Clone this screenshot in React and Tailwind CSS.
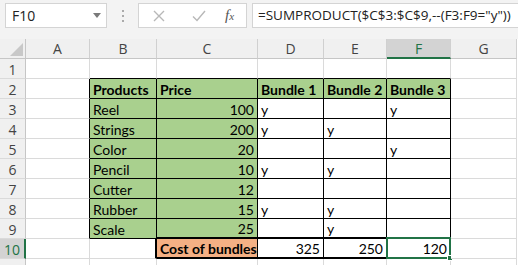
import React from "react";

const GREEN = "bg-[#a9d08e]";

const data = {
  2: ["Products", "Price", "Bundle 1", "Bundle 2", "Bundle 3"],
  3: ["Reel", "100", "y", "", "y"],
  4: ["Strings", "200", "y", "y", ""],
  5: ["Color", "20", "", "", "y"],
  6: ["Pencil", "10", "y", "y", ""],
  7: ["Cutter", "12", "", "", ""],
  8: ["Rubber", "15", "y", "y", ""],
  9: ["Scale", "25", "", "y", ""],
  10: ["", "Cost of bundles", "325", "250", "120"],
};

function inTable(r, c) {
  return (r >= 2 && r <= 9 && c >= 2 && c <= 6) || (r === 10 && c >= 3 && c <= 6);
}

function Cell({ r, c }) {
  const rightBlack = inTable(r, c) || inTable(r, c + 1);
  const bottomBlack = inTable(r, c) || inTable(r + 1, c);
  const thickBottom = (r === 9 || r === 10) && c >= 3 && c <= 6;
  const thickRight = r === 10 && c === 2;

  let rb = rightBlack ? "border-r border-r-black" : "border-r border-r-[#dadada]";
  if (thickRight) rb = "border-r-2 border-r-black";
  let bb = bottomBlack ? "border-b border-b-black" : "border-b border-b-[#dadada]";
  if (thickBottom) bb = "border-b-2 border-b-black";

  let bg = "bg-white";
  if (r >= 2 && r <= 9 && (c === 2 || c === 3)) bg = GREEN;
  if (r === 2 && c >= 4 && c <= 6) bg = GREEN;
  if (r === 10 && c === 3) bg = "bg-[#f4b084]";

  let text = "";
  if (data[r] && c >= 2 && c <= 6) text = data[r][c - 2];
  const bold = r === 2 || (r === 10 && c === 3);
  const right = (c === 3 && r >= 3 && r <= 9) || (r === 10 && c >= 4);
  const selected = r === 10 && c === 6;

  return (
    <div
      className={`relative h-[20px] ${rb} ${bb} ${bg} flex items-center px-[3px] pt-[1px] text-[14px] text-black whitespace-nowrap overflow-visible ${
        right ? "justify-end" : "justify-start"
      } ${bold ? "font-bold" : "font-normal"}`}
    >
      {text}
      {selected && (
        <>
          <div className="absolute left-[-1px] top-[-2px] right-[-1px] bottom-[-2px] border-2 border-[#217346]" />
          <div className="absolute right-[-3px] bottom-[-4px] w-[6px] h-[6px] bg-[#217346] border border-white" />
        </>
      )}
    </div>
  );
}

function RowHeader({ r }) {
  const sel = r === 10;
  return (
    <div
      className={`h-[20px] flex items-center justify-center text-[14px] pt-[1px] border-b border-b-[#dadada] ${
        sel
          ? "bg-[#d3d3d3] text-[#217346] border-r-2 border-r-[#217346]"
          : "bg-[#f0f0f0] text-[#444444] border-r border-r-[#c6c6c6]"
      }`}
    >
      {r}
    </div>
  );
}

function ColHeader({ label }) {
  const sel = label === "F";
  return (
    <div
      className={`h-[20px] flex items-center justify-center text-[14px] border-r border-r-[#d0d0d0] ${
        sel
          ? "bg-[#d3d3d3] text-[#217346] border-b-2 border-b-[#217346]"
          : "bg-[#f0f0f0] text-[#444444] border-b border-b-[#c6c6c6]"
      }`}
    >
      {label}
    </div>
  );
}

export default function App() {
  const rows = [1, 2, 3, 4, 5, 6, 7, 8, 9, 10];
  const cols = [1, 2, 3, 4, 5, 6, 7];
  return (
    <div className="w-[518px] h-[265px] overflow-hidden bg-white" style={{ fontFamily: "Lato, 'Noto Sans', sans-serif" }}>
      {/* formula bar */}
      <div className="h-[39px] bg-[#f3f3f3] flex items-start pt-[3px] pl-[5px]">
        <div className="w-[102px] shrink-0 h-[25px] bg-white border border-[#d4d4d4] flex items-center justify-between pl-[6px] pr-[5px]">
          <span className="text-[14px] text-[#222]" style={{ fontFamily: "'Open Sans', sans-serif" }}>F10</span>
          <svg width="8" height="5" viewBox="0 0 8 5"><path d="M0 0h8L4 5z" fill="#7a7a7a" /></svg>
        </div>
        <div className="w-[31px] shrink-0 h-[25px] flex flex-col items-center justify-center gap-[3px]">
          <div className="w-[2px] h-[2px] bg-[#aaaaaa]" />
          <div className="w-[2px] h-[2px] bg-[#aaaaaa]" />
          <div className="w-[2px] h-[2px] bg-[#aaaaaa]" />
        </div>
        <div className="w-[109px] shrink-0 h-[25px] bg-white border border-[#d4d4d4] flex items-center pl-[14px]">
          <svg className="shrink-0" width="12" height="12" viewBox="0 0 12 12"><path d="M1 1L11 11M11 1L1 11" stroke="#b8b8b8" strokeWidth="1.4" fill="none" /></svg>
          <svg className="ml-[27px] shrink-0" width="14" height="12" viewBox="0 0 14 12"><path d="M1 6.5L5 10.5L13 1" stroke="#b8b8b8" strokeWidth="1.4" fill="none" /></svg>
          <span className="ml-[19px] text-[15px] italic text-[#555]" style={{ fontFamily: "'Liberation Serif', serif" }}>
            f<span className="text-[11px]">x</span>
          </span>
        </div>
        <div className="ml-[5px] min-w-0 flex-1 h-[25px] bg-white border border-[#d4d4d4] border-r-0 flex items-center pl-[5px] overflow-hidden">
          <span className="text-[13.5px] text-[#222] whitespace-nowrap" style={{ fontFamily: "'Open Sans', sans-serif" }}>
            =SUMPRODUCT($C$3:$C$9,--(F3:F9="y"))
          </span>
        </div>
      </div>

      {/* sheet */}
      <div className="grid grid-cols-[26px_64px_67px_101px_66px_63px_64px_66px]" style={{ fontFamily: "'Open Sans', sans-serif" }}>
        <div className="h-[20px] bg-[#f0f0f0] border-r border-r-[#c6c6c6] border-b border-b-[#c6c6c6] flex items-end justify-end pr-[2px] pb-[2px]">
          <svg width="13" height="13" viewBox="0 0 13 13"><path d="M13 0V13H0z" fill="#c8c8c8" /></svg>
        </div>
        {["A", "B", "C", "D", "E", "F", "G"].map((l) => (
          <ColHeader key={l} label={l} />
        ))}
      </div>
      <div className="grid grid-cols-[26px_64px_67px_101px_66px_63px_64px_66px]" style={{ fontFamily: "Lato, 'Noto Sans', sans-serif" }}>
        {rows.map((r) => (
          <React.Fragment key={r}>
            <div style={{ fontFamily: "'Open Sans', sans-serif" }}>
              <RowHeader r={r} />
            </div>
            {cols.map((c) => (
              <Cell key={c} r={r} c={c} />
            ))}
          </React.Fragment>
        ))}
        <div className="h-[20px] bg-[#f0f0f0] border-r border-r-[#c6c6c6]" />
        {cols.map((c) => (
          <div key={c} className="h-[20px] border-r border-r-[#dadada]" />
        ))}
      </div>
    </div>
  );
}
